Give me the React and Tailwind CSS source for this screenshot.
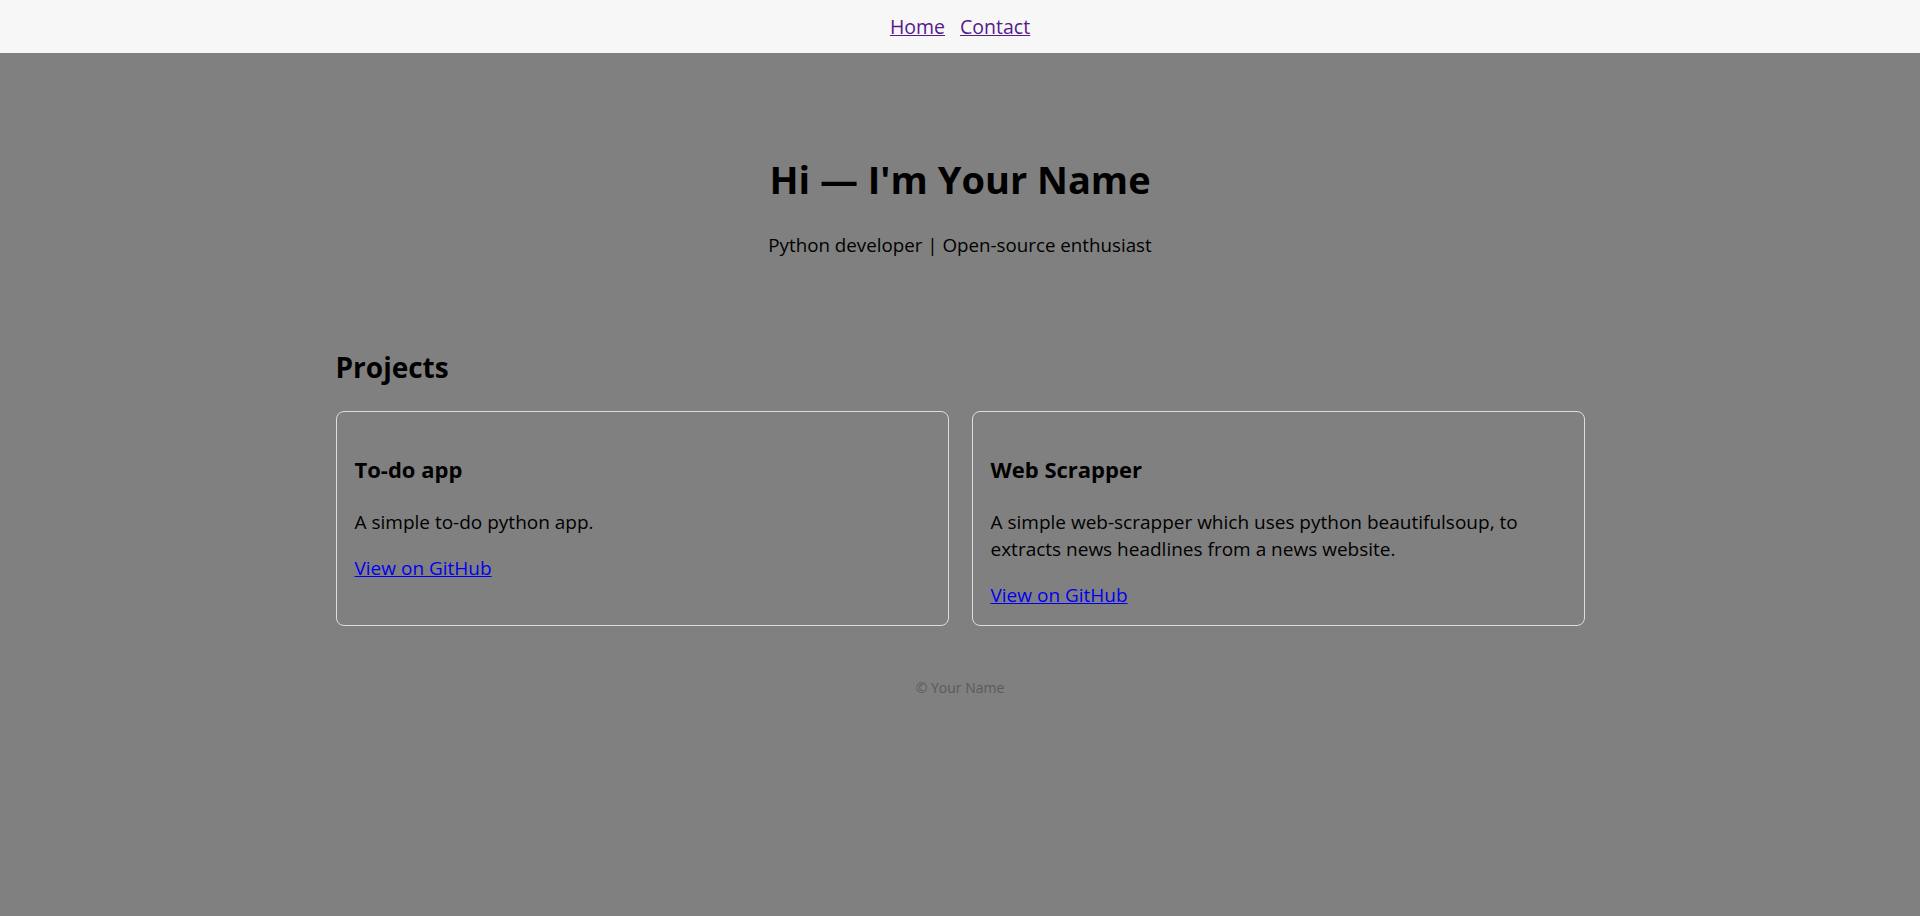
const projects = [
  {
    title: 'To-do app',
    desc: 'A simple to-do python app.',
  },
  {
    title: 'Web Scrapper',
    desc: 'A simple web-scrapper which uses python beautifulsoup, to extracts news headlines from a news website.',
  },
];

export default function App() {
  return (
    <div className="min-h-[916px] bg-[#808080] text-black font-['Open_Sans',sans-serif]">
      <header className="h-[53px] bg-[#f7f7f7] flex items-center justify-center gap-[15px] text-[19.5px]">
        <a href="#" className="underline text-[#551a8b]">Home</a>
        <a href="#" className="underline text-[#551a8b]">Contact</a>
      </header>

      <section className="text-center pt-[102px]">
        <h1 className="text-[38px] leading-[48px] font-bold">Hi — I'm Your Name</h1>
        <p className="mt-[28px] text-[18.75px] leading-[27px]">Python developer | Open-source enthusiast</p>
      </section>

      <section className="w-[1249px] mx-auto mt-[92px]">
        <h2 className="text-[28px] leading-[34px] font-bold">Projects</h2>
        <div className="grid grid-cols-2 gap-[23px] mt-[27px]">
          {projects.map((p) => (
            <div key={p.title} className="border border-[#dddddd] rounded-lg px-[18px] pt-[18px] pb-[16px]">
              <h3 className="mt-[27px] text-[22px] leading-[24px] font-bold">{p.title}</h3>
              <p className="mt-[28px] text-[19px] leading-[27px] pr-[20px]">{p.desc}</p>
              <p className="mt-[19px] text-[19px] leading-[27px]">
                <a href="#" className="underline text-[#0000ee]">View on GitHub</a>
              </p>
            </div>
          ))}
        </div>
      </section>

      <footer className="text-center mt-[52px] text-[14px] leading-[20px] text-[#5a5a5a]">© Your Name</footer>
    </div>
  );
}
